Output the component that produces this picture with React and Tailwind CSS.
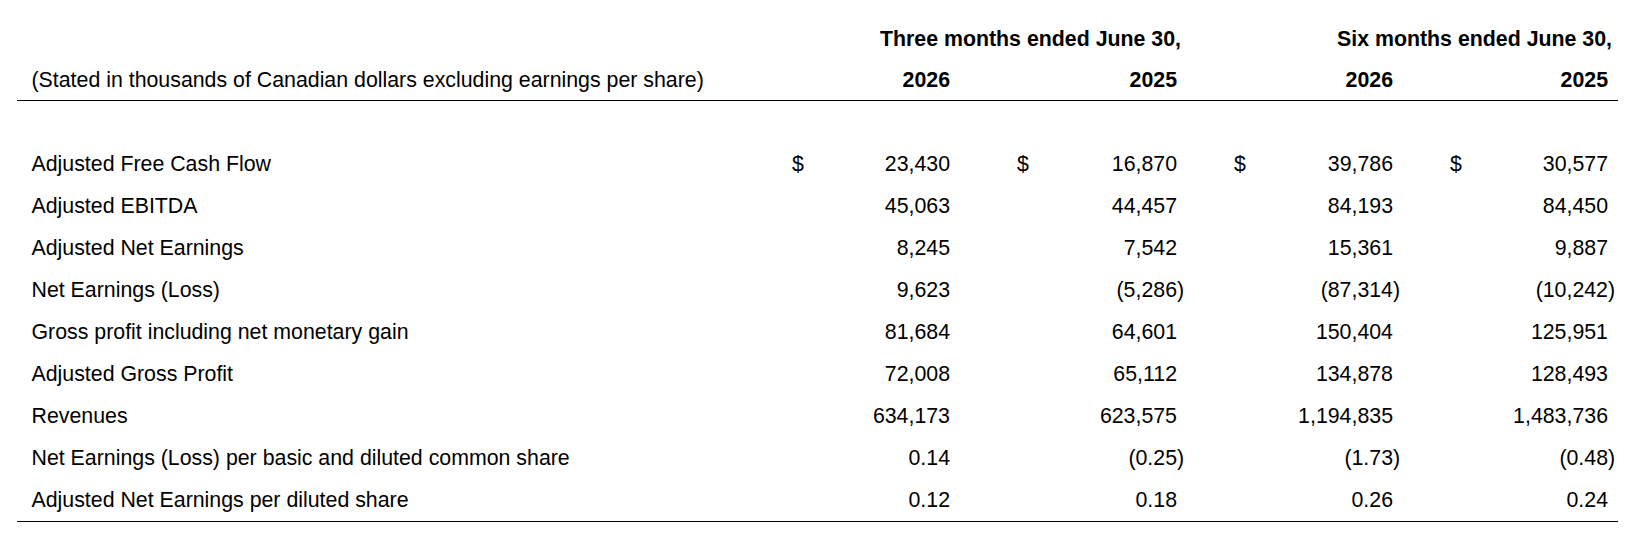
import React from "react";

const rows = [
  ["Adjusted Free Cash Flow", ["23,430", "16,870", "39,786", "30,577"], true],
  ["Adjusted EBITDA", ["45,063", "44,457", "84,193", "84,450"]],
  ["Adjusted Net Earnings", ["8,245", "7,542", "15,361", "9,887"]],
  ["Net Earnings (Loss)", ["9,623", "(5,286)", "(87,314)", "(10,242)"]],
  ["Gross profit including net monetary gain", ["81,684", "64,601", "150,404", "125,951"]],
  ["Adjusted Gross Profit", ["72,008", "65,112", "134,878", "128,493"]],
  ["Revenues", ["634,173", "623,575", "1,194,835", "1,483,736"]],
  ["Net Earnings (Loss) per basic and diluted common share", ["0.14", "(0.25)", "(1.73)", "(0.48)"]],
  ["Adjusted Net Earnings per diluted share", ["0.12", "0.18", "0.26", "0.24"]],
];

const cols =
  "grid grid-cols-[775px_30px_128px_97px_130px_87px_129px_87px_128px_10px]";

function Num({ v }) {
  const neg = v.startsWith("(");
  return (
    <div className="flex justify-end whitespace-nowrap">
      <span className={neg ? "-mr-[7.1px]" : ""}>{v}</span>
    </div>
  );
}

export default function App() {
  return (
    <div className="bg-white w-[1644px] h-[542px] pt-[18.5px] pl-[17px] text-black text-[21.33px] leading-[41.8px] font-['Liberation_Sans',Arial,sans-serif]">
      <div className="w-[1601px]">
        <div className={cols + " h-[41.8px] items-start font-bold"}>
          <div />
          <div className="col-span-4 flex justify-end whitespace-nowrap">
            <span className="-mr-[4px]">Three months ended June 30,</span>
          </div>
          <div className="col-span-4 flex justify-end whitespace-nowrap">
            <span className="-mr-[4px]">Six months ended June 30,</span>
          </div>
          <div />
        </div>
        <div className="border-b border-black">
          <div className={cols + " h-[39.8px] items-start"}>
            <div className="pl-[14.5px] whitespace-nowrap">
              (Stated in thousands of Canadian dollars excluding earnings per share)
            </div>
            <div />
            <div className="text-right font-bold">2026</div>
            <div />
            <div className="text-right font-bold">2025</div>
            <div />
            <div className="text-right font-bold">2026</div>
            <div />
            <div className="text-right font-bold">2025</div>
            <div />
          </div>
        </div>
        <div className="border-b border-black">
          <div className="h-[41.8px]" />
          {rows.map(([label, vals, dollar]) => (
            <div key={label} className={cols + " h-[42px] items-center leading-[42px]"}>
              <div className="pl-[14.5px] whitespace-nowrap">{label}</div>
              <div>{dollar ? "$" : ""}</div>
              <Num v={vals[0]} />
              <div className="pl-[67px]">{dollar ? "$" : ""}</div>
              <Num v={vals[1]} />
              <div className="pl-[57px]">{dollar ? "$" : ""}</div>
              <Num v={vals[2]} />
              <div className="pl-[57px]">{dollar ? "$" : ""}</div>
              <Num v={vals[3]} />
              <div />
            </div>
          ))}
        </div>
      </div>
    </div>
  );
}
